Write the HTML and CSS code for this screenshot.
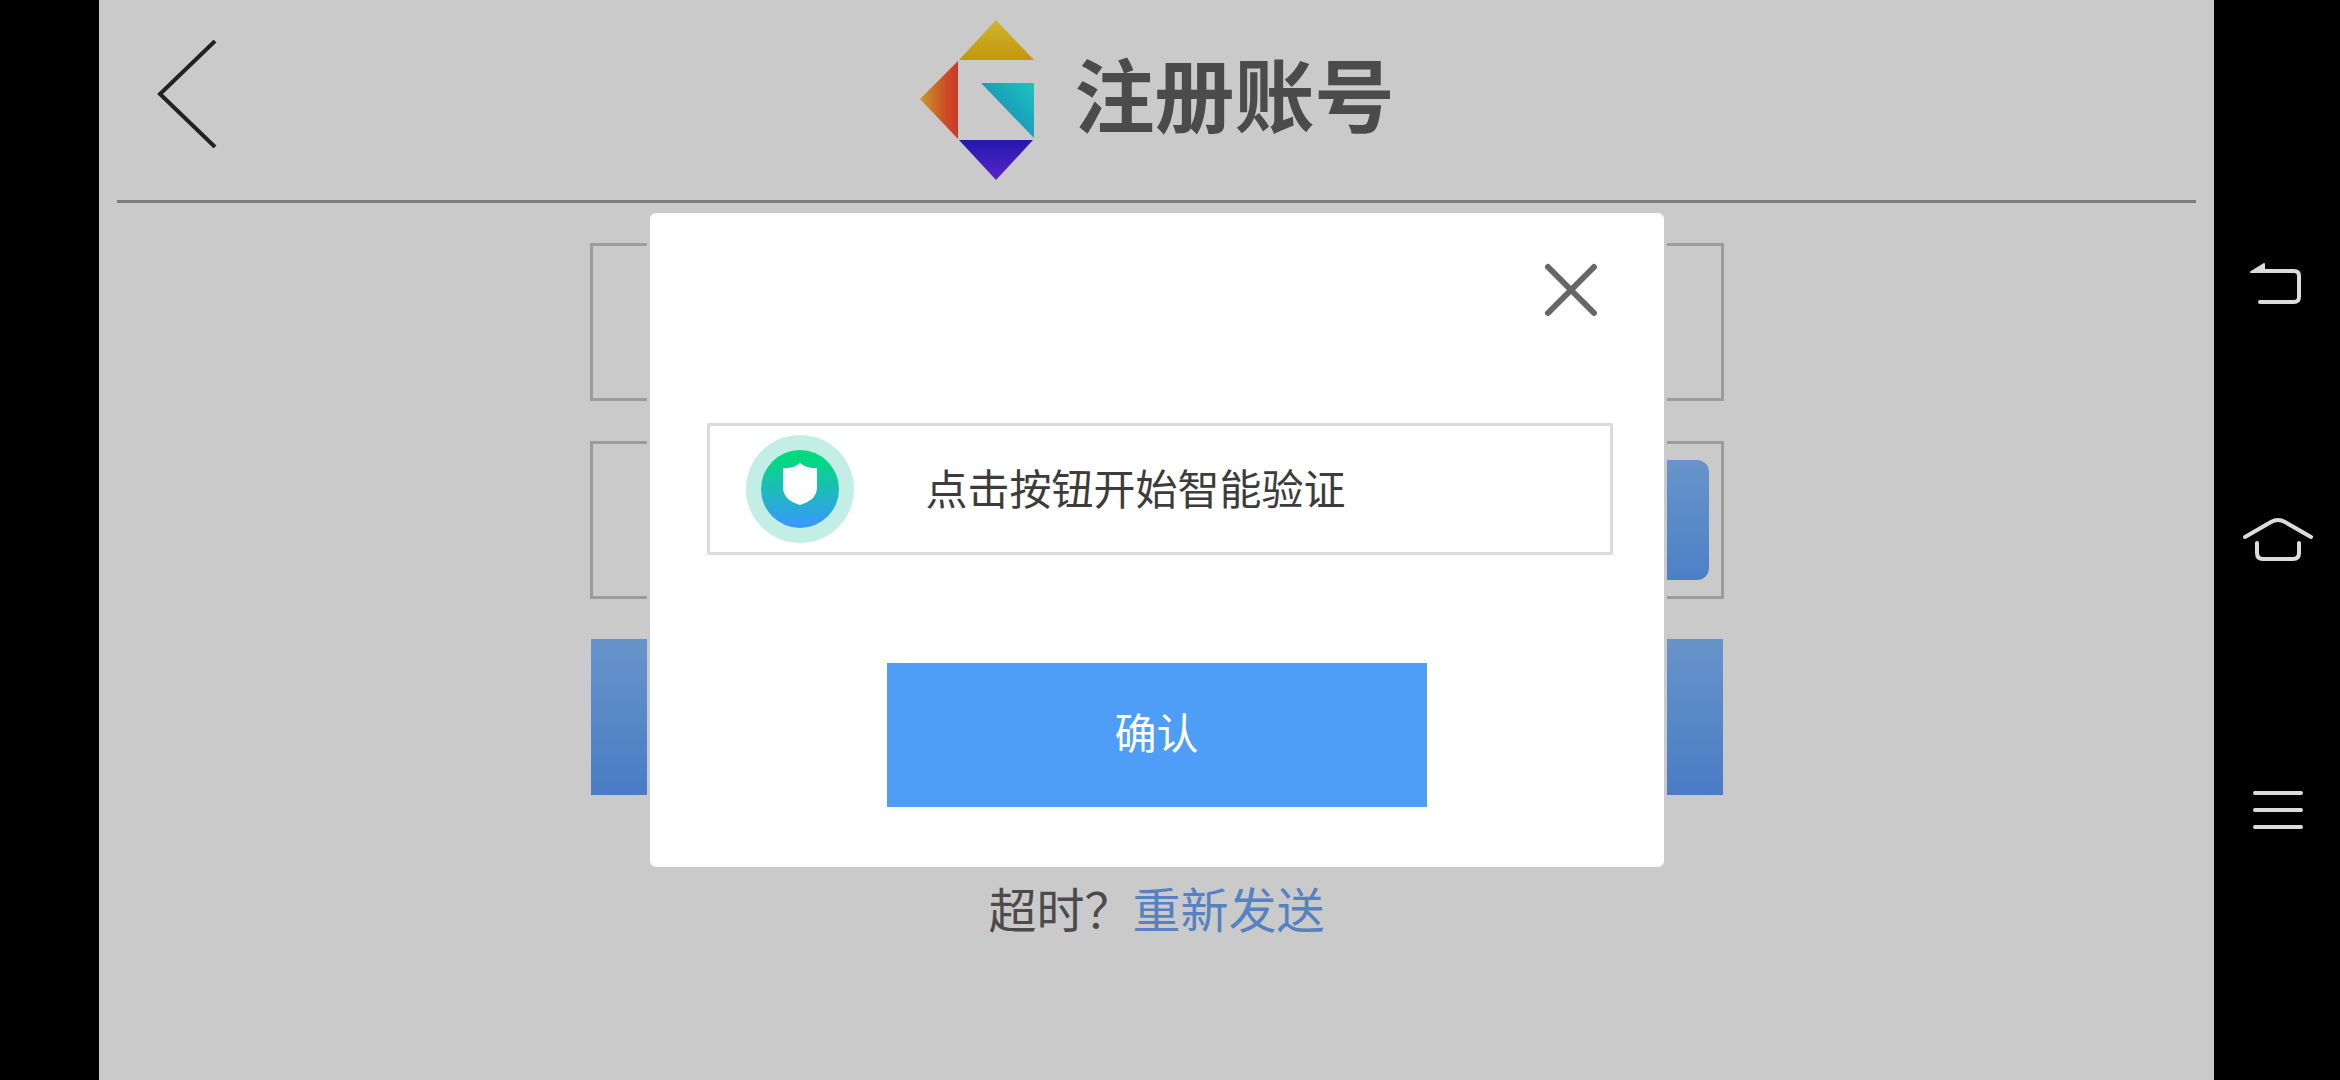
FILE: index.html
```html
<!DOCTYPE html>
<html lang="zh-CN">
<head>
<meta charset="utf-8">
<meta name="viewport" content="width=device-width, initial-scale=1">
<title>注册账号</title>
<link rel="stylesheet" href="styles.css">
</head>
<body>
<main class="app">
  <header class="header">
    <button class="icon-button back" type="button" aria-label="返回">
      <svg width="60" height="108" viewBox="0 0 60 108"><path d="M58 1 L3 54 L58 107" fill="none" stroke="#222" stroke-width="4"/></svg>
    </button>
    <div class="brand">
      <svg width="116" height="160" viewBox="0 0 116 160" aria-hidden="true">
        <defs>
          <linearGradient id="top" x1="0" y1="0" x2="0" y2="1"><stop offset="0" stop-color="#cdb62c"/><stop offset="1" stop-color="#c4960c"/></linearGradient>
          <linearGradient id="left" x1="0" y1="0" x2="1" y2="0"><stop offset="0" stop-color="#c99a2a"/><stop offset=".7" stop-color="#cc4a25"/><stop offset="1" stop-color="#c93a28"/></linearGradient>
          <linearGradient id="inner" x1="1" y1="0" x2=".3" y2=".7"><stop offset="0" stop-color="#1ac6bc"/><stop offset="1" stop-color="#1c8ebc"/></linearGradient>
          <linearGradient id="bottom" x1="0" y1="0" x2="0" y2="1"><stop offset="0" stop-color="#2418ae"/><stop offset="1" stop-color="#5a24c8"/></linearGradient>
        </defs>
        <path d="M77 0 L115 40 H40Z" fill="url(#top)"/>
        <path d="M1 79 L39 41 V119Z" fill="url(#left)"/>
        <path d="M62 63 H115 V118Z" fill="url(#inner)"/>
        <path d="M40 120 H114 L77 160Z" fill="url(#bottom)"/>
      </svg>
      <h1 class="title">注册账号</h1>
    </div>
  </header>

  <form class="form">
    <input class="field" type="text" aria-label="账号">
    <div class="field code">
      <input class="code-input" type="text" aria-label="验证码">
      <button class="code-button" type="button" aria-label="获取验证码"></button>
    </div>
    <button class="submit" type="button" aria-label="注册"></button>
    <p class="resend">超时？<a href="#">重新发送</a></p>
  </form>

  <div class="overlay">
    <section class="dialog" role="dialog" aria-modal="true" aria-label="智能验证">
      <button class="icon-button close" type="button" aria-label="关闭">
        <svg width="60" height="60" viewBox="0 0 60 60"><path d="M7 7 L53 53 M53 7 L7 53" fill="none" stroke="#666" stroke-width="6" stroke-linecap="round"/></svg>
      </button>
      <button class="verify" type="button">
        <svg width="108" height="108" viewBox="0 0 108 108" aria-hidden="true">
          <defs><linearGradient id="shield" x1="0" y1="0" x2="0" y2="1"><stop offset="0" stop-color="#00dc78"/><stop offset=".15" stop-color="#06d785"/><stop offset="1" stop-color="#3a96ff"/></linearGradient></defs>
          <circle cx="54" cy="54" r="54" fill="#c3eee6"/>
          <circle cx="54" cy="54" r="39" fill="url(#shield)"/>
          <path d="M54 28 Q61 34 71 33 V52 C71 62 64 67 54 70 C44 67 37 62 37 52 V33 Q47 34 54 28Z" fill="#fff"/>
        </svg>
        <span class="verify-text">点击按钮开始智能验证</span>
      </button>
      <button class="confirm" type="button">确认</button>
    </section>
  </div>
</main>

<nav class="system-nav" aria-label="系统导航">
  <button class="icon-button" type="button" aria-label="返回">
    <svg width="72" height="72" viewBox="0 0 72 72" fill="none" stroke="#dcdcdc" stroke-width="4" stroke-linecap="round"><path d="M22 37 H53 Q58 37 58 42 V63 Q58 68 53 68 H19"/><path d="M10 38 L23 30 V38Z" fill="#dcdcdc" stroke-width="2" stroke-linejoin="round"/></svg>
  </button>
  <button class="icon-button" type="button" aria-label="主页">
    <svg width="72" height="72" viewBox="0 0 72 72" fill="none" stroke="#dcdcdc" stroke-width="4" stroke-linecap="round"><path d="M4 33 L30 18 Q37 14 44 18 L70 33"/><path d="M16 39 V49 Q16 55 22 55 H52 Q58 55 58 49 V39"/></svg>
  </button>
  <button class="icon-button" type="button" aria-label="菜单">
    <svg width="72" height="72" viewBox="0 0 72 72" fill="none" stroke="#dcdcdc" stroke-width="4" stroke-linecap="round"><path d="M14 19 H60 M14 36 H60 M14 53 H60"/></svg>
  </button>
</nav>
</body>
</html>
```

FILE: styles.css
```css
* {
  box-sizing: border-box;
}

body {
  margin: 0;
  min-height: 100vh;
  display: flex;
  padding-left: 99px;
  background: #000;
  font-family: "Noto Sans CJK SC", sans-serif;
  color: #4b4b4b;
}

button,
input {
  margin: 0;
  padding: 0;
  border: 0;
  border-radius: 0;
  background: none;
  font: inherit;
  color: inherit;
}

svg {
  display: block;
  flex: none;
}

.app {
  position: relative;
  flex: 1;
  background: #cacaca;
}

.header {
  display: grid;
  grid-template-columns: 1fr auto 1fr;
  align-items: center;
  height: 203px;
  margin: 0 18px;
  border-bottom: 3px solid #7c7c7c;
}

.back {
  justify-self: start;
  margin: 0 0 12px 40px;
}

.brand {
  grid-column: 2;
  display: flex;
  align-items: center;
  gap: 40px;
}

.title {
  margin: 0;
  padding-bottom: 18px;
  font-size: 80px;
  line-height: 120px;
  font-weight: 700;
}

.form {
  display: flex;
  flex-direction: column;
  gap: 40px;
  width: 100%;
  max-width: 1134px;
  margin: 0 auto;
  padding: 40px 0;
}

.field {
  width: 100%;
  height: 158px;
  border: 3px solid #9c9c9c;
  padding: 0 12px;
  font-size: 48px;
}

.code {
  display: flex;
  align-items: center;
}

.code-input {
  flex: 1;
  min-width: 0;
  height: 100%;
}

.code-button {
  width: 300px;
  height: 120px;
  border-radius: 12px;
  background: linear-gradient(#6894ca, #4c80c6);
}

.submit {
  height: 156px;
  margin: 0 1px;
  background: linear-gradient(#6894ca, #487cc4);
}

.resend {
  margin: 36px 0 0;
  font-size: 48px;
  line-height: 72px;
  text-align: center;
}

.resend a {
  color: #5682c2;
  text-decoration: none;
}

.overlay {
  position: absolute;
  inset: 0;
  display: flex;
  align-items: center;
  justify-content: center;
}

.dialog {
  display: flex;
  flex-direction: column;
  width: 100%;
  max-width: 1020px;
  padding: 47px 51px 60px;
  border: 3px solid #cacaca;
  border-radius: 9px;
  background: #fff;
}

.close {
  align-self: flex-end;
  margin-right: 12px;
}

.verify {
  display: flex;
  align-items: center;
  gap: 72px;
  height: 132px;
  margin: 103px 0 108px 6px;
  padding: 0 36px;
  border: 3px solid #dcdcdc;
  color: #3c3c3c;
  font-size: 42px;
  line-height: 60px;
}

.verify-text {
  padding-bottom: 4px;
}

.confirm {
  align-self: center;
  width: 540px;
  height: 144px;
  padding-bottom: 8px;
  background: #4e9df6;
  color: #fff;
  font-size: 42px;
  line-height: 60px;
}

.system-nav {
  display: grid;
  grid-template-rows: repeat(3, 1fr);
  place-items: center;
  width: 126px;
  padding: 135px 0;
}
```
